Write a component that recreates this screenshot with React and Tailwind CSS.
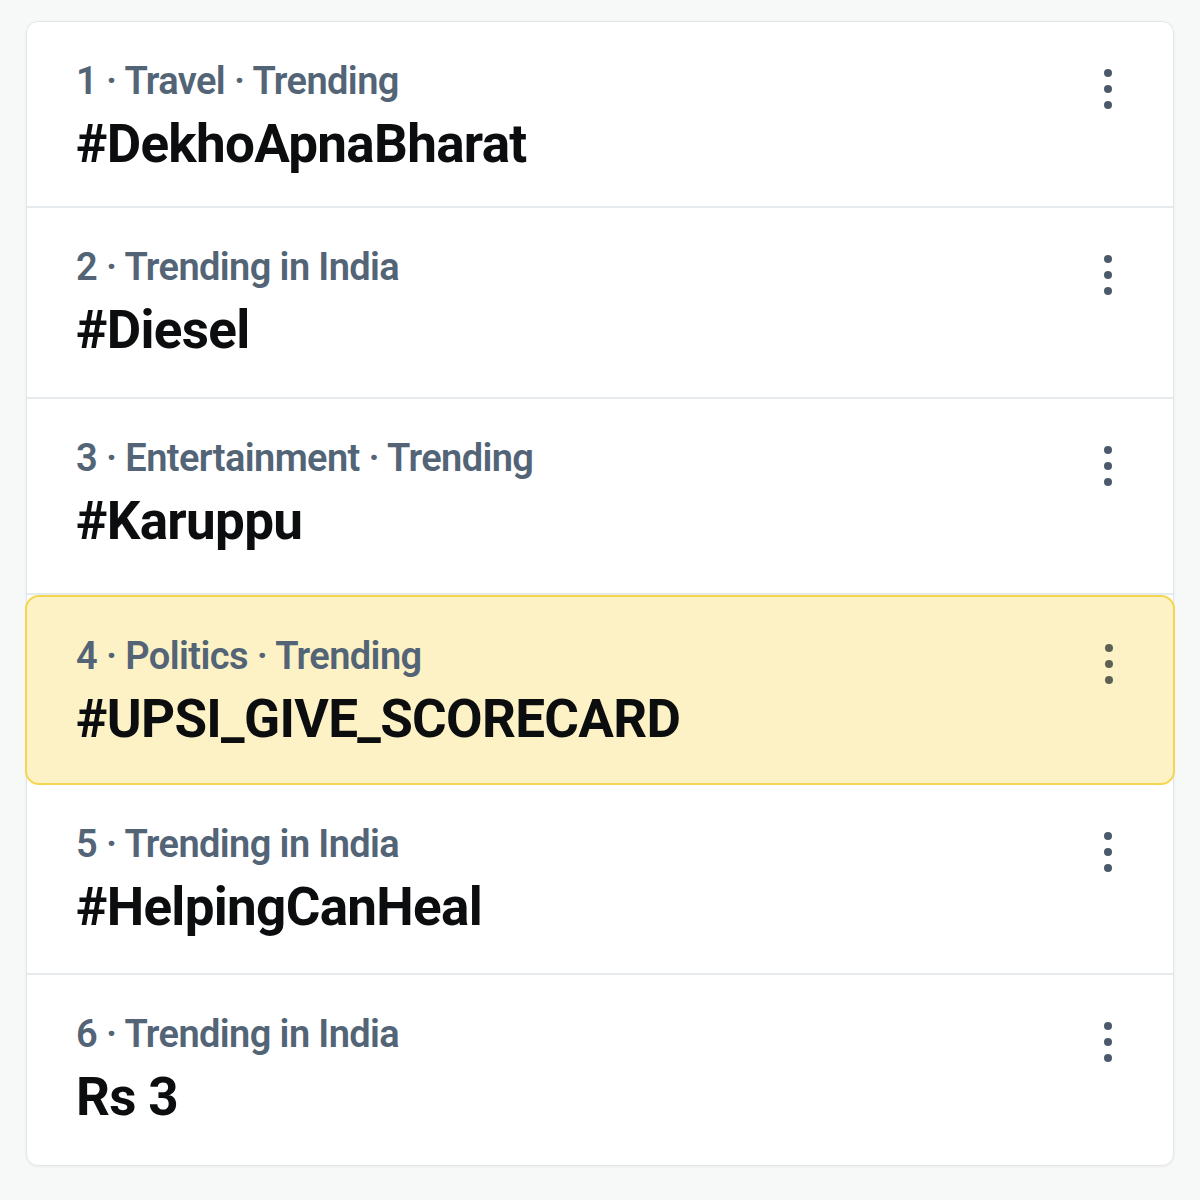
import React from 'react';

const trends = [
  { rank: 1, meta: 'Travel · Trending', title: '#DekhoApnaBharat', h: 'h-[186px]' },
  { rank: 2, meta: 'Trending in India', title: '#Diesel', h: 'h-[191px]' },
  { rank: 3, meta: 'Entertainment · Trending', title: '#Karuppu', h: 'h-[196px]' },
  { rank: 4, meta: 'Politics · Trending', title: '#UPSI_GIVE_SCORECARD', h: 'h-[190px]', highlight: true },
  { rank: 5, meta: 'Trending in India', title: '#HelpingCanHeal', h: 'h-[190px]' },
  { rank: 6, meta: 'Trending in India', title: 'Rs 3', h: 'h-[190px]' },
];

const Kebab = ({ color }) => (
  <svg width="10" height="40" viewBox="0 0 10 40" className="shrink-0">
    <circle cx="5" cy="4" r="4" fill={color} />
    <circle cx="5" cy="20" r="4" fill={color} />
    <circle cx="5" cy="36" r="4" fill={color} />
  </svg>
);

const TrendRow = ({ trend, last }) => {
  // highlighted row sits one pixel outside the card on both sides
  const base = trend.highlight
    ? '-mx-[2px] rounded-[14px] border-2 border-[#f5d650] bg-[#fdf2c5] pl-[49px] pr-[59px]'
    : `pl-[49px] pr-[60px] ${last ? '' : 'border-b-2 border-[#e7eaec]'}`;

  return (
    <div className={`flex items-start justify-between ${trend.h} ${base}`}>
      <div className="pt-[35px]">
        <div className="text-[38px] leading-[48px] font-semibold text-[#526476] tracking-[-0.6px]">
          {trend.rank} · {trend.meta}
        </div>
        <div className="mt-[11px] text-[53px] leading-[56px] font-bold text-[#0c0d0f] tracking-[-0.7px]">
          {trend.title}
        </div>
      </div>
      <div className="pt-[47px]">
        <Kebab color={trend.highlight ? '#5b6253' : '#4b5a6a'} />
      </div>
    </div>
  );
};

export default function App() {
  return (
    <div
      className="min-h-[1200px] w-[1200px] bg-[#f7f8f8] pt-[21px]"
      style={{ fontFamily: 'Roboto, "Liberation Sans", sans-serif' }}
    >
      <div className="mx-[26px] rounded-[12px] border border-[#e3e6e8] bg-white shadow-[0_1px_3px_rgba(0,0,0,0.06)]">
        {trends.map((t, i) => (
          <TrendRow key={t.rank} trend={t} last={i === trends.length - 1} />
        ))}
      </div>
    </div>
  );
}
